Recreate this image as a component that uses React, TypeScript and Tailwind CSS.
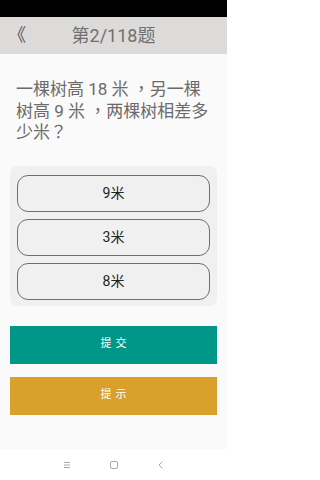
export default function App() {
  const options = ["9米", "3米", "8米"]
  const font = { fontFamily: '"Roboto", "Noto Sans CJK SC", sans-serif' }
  const qFont = { fontFamily: '"Roboto", "Noto Sans CJK TC", sans-serif' }

  return (
    <div className="w-[227px] h-[480px] flex flex-col bg-[#fafafa]" style={font}>
      {/* status bar */}
      <div className="h-[17px] bg-black shrink-0" />

      {/* header */}
      <div className="h-[37px] bg-[#dcdbd9] flex items-center relative shrink-0">
        <span className="absolute left-[8px] top-[7px] text-[18px] leading-[22px] text-[#555]">《</span>
        <div className="w-full text-center text-[18px] leading-[22px] font-normal text-[#707070]">第2/118题</div>
      </div>

      {/* question */}
      <p className="px-4 pt-[25px] text-[17px] leading-[21.5px] text-[#6b6b6b]" style={qFont}>
        一棵树高 18 米 ，另一棵树高 9 米 ，两棵树相差多少米？
      </p>

      {/* options */}
      <div className="mx-[10px] mt-[22px] h-[140px] bg-[#f0f0f0] rounded-[7px] px-[7px] pt-[9px] flex flex-col gap-[7px]">
        {options.map((o) => (
          <div
            key={o}
            className="h-[37px] border-[1.5px] border-[#6f6f6f] rounded-[11px] flex items-center justify-center text-[14px] text-[#222]"
          >
            {o}
          </div>
        ))}
      </div>

      {/* actions */}
      <button className="mx-[10px] mt-[20px] h-[38px] bg-[#009688] text-white text-[11px] tracking-[4px] pl-1">
        提交
      </button>
      <button className="mx-[10px] mt-[13px] h-[38px] bg-[#d9a02c] text-white text-[11px] tracking-[4px] pl-1">
        提示
      </button>

      <div className="flex-1" />

      {/* nav bar */}
      <div className="h-[31px] bg-white flex items-center justify-center gap-[35px] shrink-0 text-[#aaa]">
        <svg width="12" height="12" viewBox="0 0 12 12" fill="none" stroke="currentColor" strokeWidth="1">
          <path d="M3 3.5h6M3 6h6M3 8.5h6" />
        </svg>
        <svg width="12" height="12" viewBox="0 0 12 12" fill="none" stroke="currentColor" strokeWidth="1">
          <rect x="2.5" y="2.5" width="7" height="7" rx="1.5" />
        </svg>
        <svg width="12" height="12" viewBox="0 0 12 12" fill="none" stroke="currentColor" strokeWidth="1">
          <path d="M7.5 2.5L4 6l3.5 3.5" />
        </svg>
      </div>
    </div>
  )
}
